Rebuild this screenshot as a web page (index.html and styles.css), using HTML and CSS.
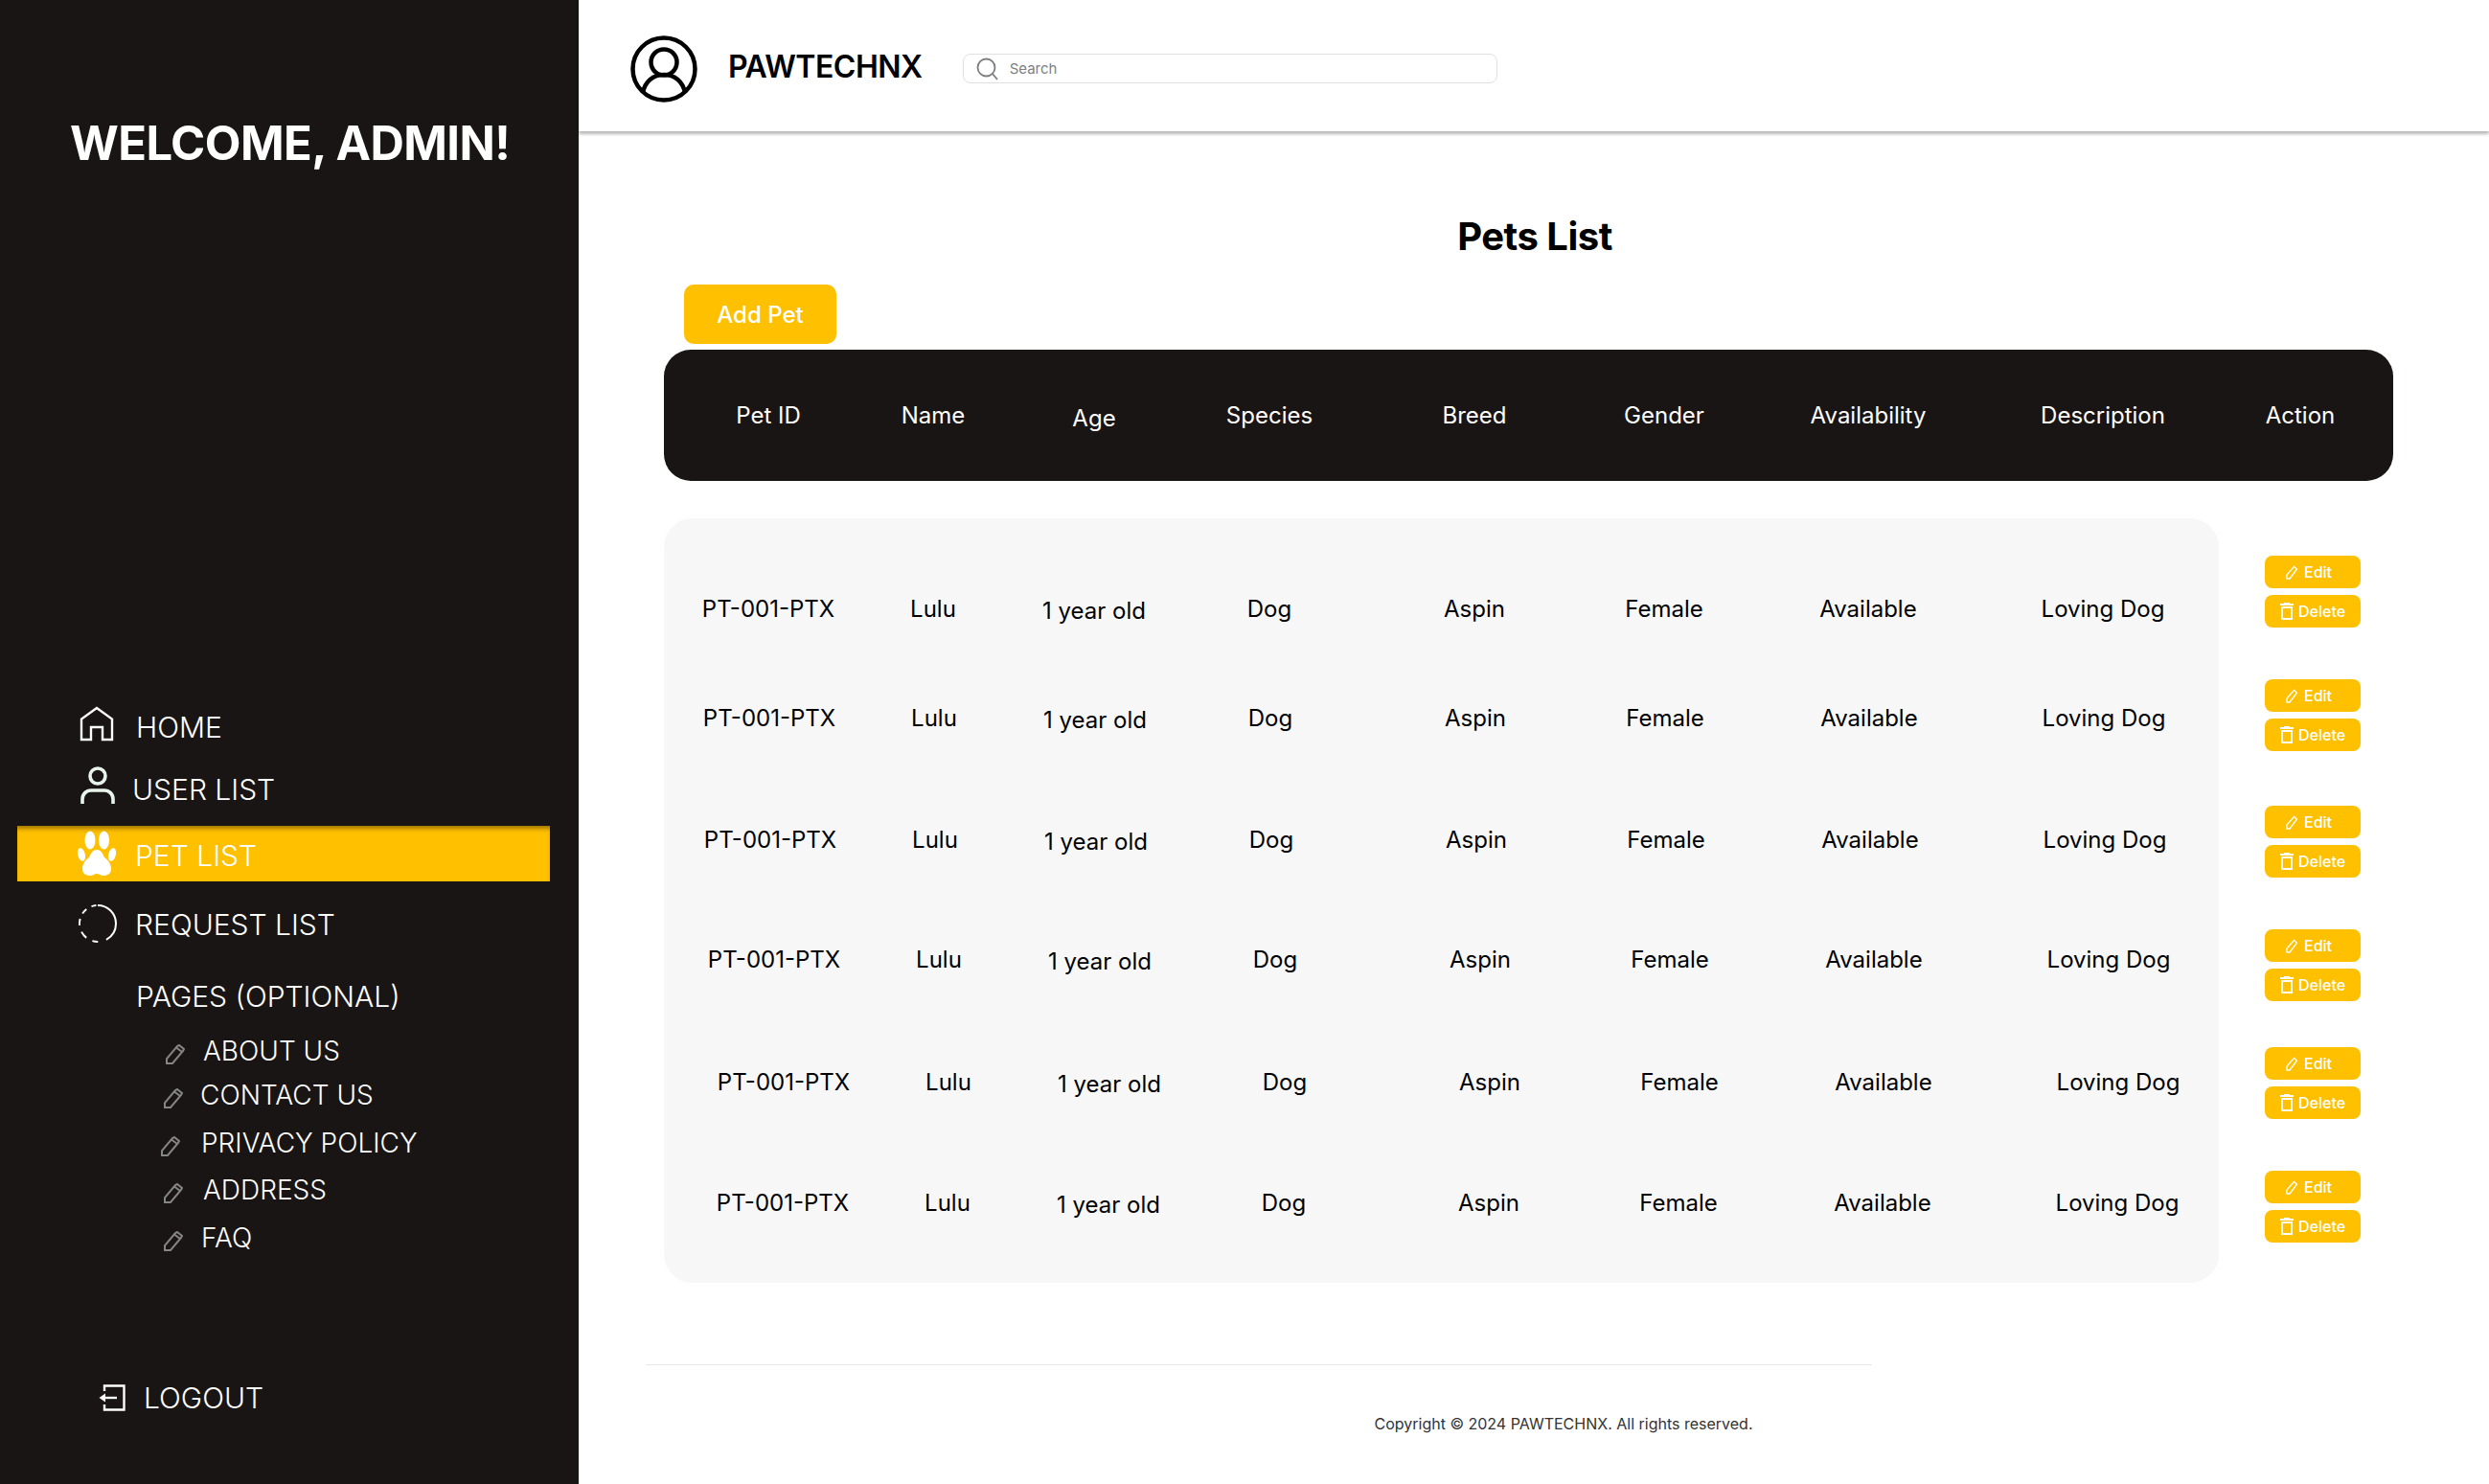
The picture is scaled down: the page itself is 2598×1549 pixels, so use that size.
FILE: index.html
```html
<!DOCTYPE html>
<html lang="en">

<head>
  <meta charset="UTF-8">
  <meta name="viewport" content="width=device-width, initial-scale=1.0">
  <title>Pets List</title>
  <link rel="stylesheet" href="styles.css">
</head>

<body>
  <div class="page">
    <aside class="sidebar">
      <h1 class="welcome">WELCOME, ADMIN!</h1>

      <nav class="nav">
        <a class="nav-item nav-home">
          <svg class="nav-icon" width="36" height="37" viewBox="0 0 36 37" fill="none" stroke="#fff" stroke-width="2.4">
            <path d="M2 35V13.5L18 2l16 11.500V35H24V22H12v13z" />
          </svg>
          <span>HOME</span>
        </a>
        <a class="nav-item nav-user">
          <svg class="nav-icon" width="38" height="40" viewBox="0 0 38 40" fill="none" stroke="#e6f4ea" stroke-width="3.600">
            <circle cx="19" cy="10" r="8" />
            <path d="M3 39v-5a9 9 0 0 1 9-9h14a9 9 0 0 1 9 9v5" />
          </svg>
          <span>USER LIST</span>
        </a>
        <a class="nav-item nav-pet active">
          <svg class="nav-icon" width="42" height="48" viewBox="0 0 42 48" fill="#fff">
            <ellipse cx="14" cy="10" rx="5.500" ry="9.500" />
            <ellipse cx="28.500" cy="10" rx="5.500" ry="9.500" />
            <ellipse cx="5" cy="25" rx="3.800" ry="7" transform="rotate(-14 5 25)" />
            <ellipse cx="37" cy="25" rx="3.800" ry="7" transform="rotate(14 37 25)" />
            <path d="M21 20c4 0 6 3 8 8 3 2 7 6 7 12 0 5-4 7-8 7-3 0-5-2-7-2s-4 2-7 2c-4 0-8-2-8-7 0-6 4-10 7-12 2-5 4-8 8-8z" />
          </svg>
          <span>PET LIST</span>
        </a>
        <a class="nav-item nav-request">
          <svg class="nav-icon" width="40" height="40" viewBox="0 0 40 40" fill="none" stroke="#fff" stroke-width="2">
            <circle cx="20" cy="20" r="19" transform="rotate(-90 20 20)" stroke-dasharray="50 9 6 7 8 7 7 6 6 6 5 2" />
          </svg>
          <span>REQUEST LIST</span>
        </a>
        <a class="nav-item nav-pages">
          <span class="nav-spacer"></span>
          <span>PAGES (OPTIONAL)</span>
        </a>

        <div class="subnav">
          <a class="sub-item sub-about">
            <svg class="pencil" width="20" height="21" viewBox="0 0 20 21" fill="none" stroke="#858585" stroke-width="2">
              <path d="M1 20v-5L12 2l2-1 5 4-1 2L7 20zM11 3.500l6 4.500" />
            </svg>
            <span>ABOUT US</span>
          </a>
          <a class="sub-item sub-contact">
            <svg class="pencil" width="20" height="21" viewBox="0 0 20 21" fill="none" stroke="#858585" stroke-width="2">
              <path d="M1 20v-5L12 2l2-1 5 4-1 2L7 20zM11 3.500l6 4.500" />
            </svg>
            <span>CONTACT US</span>
          </a>
          <a class="sub-item sub-privacy">
            <svg class="pencil" width="20" height="21" viewBox="0 0 20 21" fill="none" stroke="#858585" stroke-width="2">
              <path d="M1 20v-5L12 2l2-1 5 4-1 2L7 20zM11 3.500l6 4.500" />
            </svg>
            <span>PRIVACY POLICY</span>
          </a>
          <a class="sub-item sub-address">
            <svg class="pencil" width="20" height="21" viewBox="0 0 20 21" fill="none" stroke="#858585" stroke-width="2">
              <path d="M1 20v-5L12 2l2-1 5 4-1 2L7 20zM11 3.500l6 4.500" />
            </svg>
            <span>ADDRESS</span>
          </a>
          <a class="sub-item sub-faq">
            <svg class="pencil" width="20" height="21" viewBox="0 0 20 21" fill="none" stroke="#858585" stroke-width="2">
              <path d="M1 20v-5L12 2l2-1 5 4-1 2L7 20zM11 3.500l6 4.500" />
            </svg>
            <span>FAQ</span>
          </a>
        </div>
      </nav>

      <a class="logout">
        <svg width="28" height="28" viewBox="0 0 28 28" fill="none" stroke="#fff" stroke-width="2.400">
          <path d="M6 7V1.500h20.500v25H6V21" />
          <path d="M19 14H6" />
          <path d="M0.500 14L7 9.500v9z" fill="#fff" stroke="none" />
        </svg>
        <span>LOGOUT</span>
      </a>
    </aside>

    <main class="main">
      <header class="topbar">
        <svg class="brand-icon" width="70" height="70" viewBox="0 0 70 70" fill="none" stroke="#000" stroke-width="4.500">
          <circle cx="35" cy="35" r="32.500" />
          <circle cx="35" cy="28" r="13.500" />
          <path d="M13 60c2-12 11-19 22-19s20 7 22 19" />
        </svg>
        <span class="brand-name">PAWTECHNX</span>
        <div class="search">
          <svg width="23" height="24" viewBox="0 0 23 24" fill="none" stroke="#7d7d7d" stroke-width="1.800">
            <circle cx="10.500" cy="10.500" r="9" />
            <path d="M17 17l5 6" />
          </svg>
          <span class="search-text">Search</span>
        </div>
      </header>

      <section class="content">
        <h2 class="page-title">Pets List</h2>
        <button type="button" class="add-btn">Add Pet</button>

        <div class="table-head">
          <div>Pet ID</div>
          <div>Name</div>
          <div class="col-age">Age</div>
          <div>Species</div>
          <div>Breed</div>
          <div>Gender</div>
          <div>Availability</div>
          <div>Description</div>
          <div>Action</div>
        </div>

        <div class="table-body">
          <div class="rows-panel">
            <div class="pet-row">
              <div>PT-001-PTX</div><div>Lulu</div><div class="col-age">1 year old</div><div>Dog</div><div>Aspin</div><div>Female</div><div>Available</div><div>Loving Dog</div>
            </div>
            <div class="pet-row">
              <div>PT-001-PTX</div><div>Lulu</div><div class="col-age">1 year old</div><div>Dog</div><div>Aspin</div><div>Female</div><div>Available</div><div>Loving Dog</div>
            </div>
            <div class="pet-row">
              <div>PT-001-PTX</div><div>Lulu</div><div class="col-age">1 year old</div><div>Dog</div><div>Aspin</div><div>Female</div><div>Available</div><div>Loving Dog</div>
            </div>
            <div class="pet-row">
              <div>PT-001-PTX</div><div>Lulu</div><div class="col-age">1 year old</div><div>Dog</div><div>Aspin</div><div>Female</div><div>Available</div><div>Loving Dog</div>
            </div>
            <div class="pet-row">
              <div>PT-001-PTX</div><div>Lulu</div><div class="col-age">1 year old</div><div>Dog</div><div>Aspin</div><div>Female</div><div>Available</div><div>Loving Dog</div>
            </div>
            <div class="pet-row">
              <div>PT-001-PTX</div><div>Lulu</div><div class="col-age">1 year old</div><div>Dog</div><div>Aspin</div><div>Female</div><div>Available</div><div>Loving Dog</div>
            </div>
          </div>

          <div class="actions">
            <div class="action-stack">
              <button type="button" class="mini-btn mini-edit"><svg width="13" height="15" viewBox="0 0 13 15" fill="none" stroke="#fff" stroke-width="1.300"><path d="M1 14v-4L8.500 1.500l3 2.500L4 14z" /></svg>Edit</button>
              <button type="button" class="mini-btn"><svg width="14" height="18" viewBox="0 0 14 18" fill="none" stroke="#fff" stroke-width="1.800"><path d="M0 2h14M4 1h6M2 5h10v12H2z" /></svg>Delete</button>
            </div>
            <div class="action-stack">
              <button type="button" class="mini-btn mini-edit"><svg width="13" height="15" viewBox="0 0 13 15" fill="none" stroke="#fff" stroke-width="1.300"><path d="M1 14v-4L8.500 1.500l3 2.500L4 14z" /></svg>Edit</button>
              <button type="button" class="mini-btn"><svg width="14" height="18" viewBox="0 0 14 18" fill="none" stroke="#fff" stroke-width="1.800"><path d="M0 2h14M4 1h6M2 5h10v12H2z" /></svg>Delete</button>
            </div>
            <div class="action-stack">
              <button type="button" class="mini-btn mini-edit"><svg width="13" height="15" viewBox="0 0 13 15" fill="none" stroke="#fff" stroke-width="1.300"><path d="M1 14v-4L8.500 1.500l3 2.500L4 14z" /></svg>Edit</button>
              <button type="button" class="mini-btn"><svg width="14" height="18" viewBox="0 0 14 18" fill="none" stroke="#fff" stroke-width="1.800"><path d="M0 2h14M4 1h6M2 5h10v12H2z" /></svg>Delete</button>
            </div>
            <div class="action-stack">
              <button type="button" class="mini-btn mini-edit"><svg width="13" height="15" viewBox="0 0 13 15" fill="none" stroke="#fff" stroke-width="1.300"><path d="M1 14v-4L8.500 1.500l3 2.500L4 14z" /></svg>Edit</button>
              <button type="button" class="mini-btn"><svg width="14" height="18" viewBox="0 0 14 18" fill="none" stroke="#fff" stroke-width="1.800"><path d="M0 2h14M4 1h6M2 5h10v12H2z" /></svg>Delete</button>
            </div>
            <div class="action-stack">
              <button type="button" class="mini-btn mini-edit"><svg width="13" height="15" viewBox="0 0 13 15" fill="none" stroke="#fff" stroke-width="1.300"><path d="M1 14v-4L8.500 1.500l3 2.500L4 14z" /></svg>Edit</button>
              <button type="button" class="mini-btn"><svg width="14" height="18" viewBox="0 0 14 18" fill="none" stroke="#fff" stroke-width="1.800"><path d="M0 2h14M4 1h6M2 5h10v12H2z" /></svg>Delete</button>
            </div>
            <div class="action-stack">
              <button type="button" class="mini-btn mini-edit"><svg width="13" height="15" viewBox="0 0 13 15" fill="none" stroke="#fff" stroke-width="1.300"><path d="M1 14v-4L8.500 1.500l3 2.500L4 14z" /></svg>Edit</button>
              <button type="button" class="mini-btn"><svg width="14" height="18" viewBox="0 0 14 18" fill="none" stroke="#fff" stroke-width="1.800"><path d="M0 2h14M4 1h6M2 5h10v12H2z" /></svg>Delete</button>
            </div>
          </div>
        </div>

        <footer class="footer">
          <div class="footer-line"></div>
          <p class="copyright">Copyright © 2024 PAWTECHNX. All rights reserved.</p>
        </footer>
      </section>
    </main>
  </div>
</body>

</html>
```

FILE: styles.css
```css
* {
  box-sizing: border-box;
}

body {
  margin: 0;
  font-family: Inter, "Liberation Sans", sans-serif;
  color: #000;
  background: #fff;
}

.page {
  display: flex;
  height: 1549px;
  overflow: hidden;
}

/* sidebar */
.sidebar {
  width: 604px;
  flex-shrink: 0;
  background-color: #191514;
  color: #fff;
  display: flex;
  flex-direction: column;
}

.welcome {
  margin: 116px 0 0 73px;
  font-size: 49px;
  line-height: 68px;
  font-weight: 700;
  letter-spacing: -0.6px;
  white-space: nowrap;
}

.nav {
  margin-top: 545px;
  display: flex;
  flex-direction: column;
}

.nav-item {
  display: flex;
  align-items: center;
  height: 58px;
  padding-left: 82px;
  font-size: 30px;
  font-weight: 300;
  white-space: nowrap;
}

.nav-icon {
  flex-shrink: 0;
}

.nav-home {
  margin-top: 0;
  padding-left: 83px;
  gap: 23px;
}

.nav-home .nav-icon,
.nav-user .nav-icon {
  margin-bottom: 6px;
}

.nav-home span,
.nav-user span,
.nav-request span,
.nav-pages span {
  padding-top: 2px;
}

.nav-user {
  margin-top: 7px;
  padding-left: 83px;
  gap: 17px;
}

.nav-pet {
  margin-top: 10px;
  padding-left: 80px;
  gap: 19px;
}

.active {
  margin-left: 18px;
  margin-right: 30px;
  padding-left: 62px;
  background-color: #ffc000;
  box-shadow: inset 0 5px 4px -2px rgba(110, 80, 0, 0.65);
}

.active span {
  padding-top: 4px;
}

.nav-request {
  margin-top: 15px;
  padding-left: 82px;
  gap: 19px;
}

.nav-pages {
  margin-top: 17px;
  padding-left: 82px;
  gap: 19px;
}

.nav-spacer {
  width: 41px;
}

.subnav {
  display: flex;
  flex-direction: column;
}

.sub-item {
  display: flex;
  align-items: center;
  height: 44px;
  padding-top: 2px;
  font-size: 28px;
  font-weight: 300;
  white-space: nowrap;
}

.pencil {
  flex-shrink: 0;
  position: relative;
  top: 3px;
}

.sub-about {
  margin-top: 6px;
  padding-left: 173px;
  gap: 19px;
}

.sub-contact {
  margin-top: 2px;
  padding-left: 171px;
  gap: 18px;
}

.sub-privacy {
  margin-top: 6px;
  padding-left: 168px;
  gap: 22px;
}

.sub-address {
  margin-top: 5px;
  padding-left: 171px;
  gap: 21px;
}

.sub-faq {
  margin-top: 6px;
  padding-left: 171px;
  gap: 19px;
}

.logout {
  margin-top: auto;
  margin-bottom: 68px;
  padding-left: 103px;
  display: flex;
  align-items: center;
  gap: 19px;
  height: 44px;
  font-size: 30px;
  font-weight: 300;
}

/* main */
.main {
  flex: 1;
  min-width: 0;
}

.topbar {
  height: 137px;
  display: flex;
  align-items: center;
  padding: 6px 0 0 54px;
  background: #fff;
  box-shadow: 0 3px 3px rgba(0, 0, 0, 0.28);
}

.brand-name {
  margin-left: 32px;
  padding-bottom: 5px;
  font-size: 32px;
  font-weight: 600;
  letter-spacing: -0.5px;
}

.search {
  margin-left: 42px;
  width: 558px;
  height: 31px;
  border: 1px solid #e0e0e0;
  border-radius: 8px;
  display: flex;
  align-items: center;
  gap: 12px;
  padding-left: 13px;
}

.search-text {
  font-size: 15px;
  color: #808080;
}

.content {
  padding: 85px 0 0 89px;
}

.page-title {
  margin: 0;
  padding-left: 13px;
  width: 1805px;
  text-align: center;
  font-size: 40px;
  line-height: 50px;
  font-weight: 700;
  letter-spacing: -0.5px;
}

.add-btn {
  display: block;
  margin: 25px 0 0 21px;
  width: 159px;
  height: 62px;
  border: 0;
  border-radius: 10px;
  background-color: #ffc000;
  color: #fff;
  font-family: inherit;
  font-size: 24px;
  font-weight: 500;
}

.table-head,
.pet-row {
  display: grid;
  grid-template-columns: 218px 126px 210px 156px 272px 124px 302px 188px 224px;
  text-align: center;
  font-size: 24px;
}

.table-head {
  margin-top: 6px;
  width: 1805px;
  height: 137px;
  align-items: center;
  border-radius: 28px;
  background-color: #191514;
  color: #fff;
  font-weight: 400;
}

.table-head .col-age {
  padding-top: 5px;
}

.table-body {
  margin-top: 39px;
  display: flex;
  align-items: flex-start;
}

.rows-panel {
  width: 1623px;
  height: 798px;
  border-radius: 30px;
  background-color: #f7f7f7;
  padding-top: 4px;
}

.pet-row {
  height: 60px;
  align-items: center;
  grid-template-columns: 218px 126px 210px 156px 272px 124px 302px 188px;
}

.pet-row .col-age {
  padding-top: 5px;
}

.pet-row div:nth-child(n+5) {
  padding-top: 1px;
}

.pet-row:nth-child(1) {
  margin-top: 60px;
}

.pet-row:nth-child(2) {
  margin-top: 54px;
  padding-left: 1px;
}

.pet-row:nth-child(3) {
  margin-top: 67px;
  padding-left: 2px;
}

.pet-row:nth-child(4) {
  margin-top: 65px;
  padding-left: 6px;
}

.pet-row:nth-child(5) {
  margin-top: 68px;
  padding-left: 16px;
}

.pet-row:nth-child(6) {
  margin-top: 66px;
  padding-left: 15px;
}

.actions {
  margin-left: 48px;
  display: flex;
  flex-direction: column;
}

.action-stack {
  display: flex;
  flex-direction: column;
  gap: 7px;
}

.action-stack:nth-child(1) {
  margin-top: 39px;
}

.action-stack:nth-child(2) {
  margin-top: 54px;
}

.action-stack:nth-child(3) {
  margin-top: 57px;
}

.action-stack:nth-child(4) {
  margin-top: 54px;
}

.action-stack:nth-child(5) {
  margin-top: 48px;
}

.action-stack:nth-child(6) {
  margin-top: 54px;
}

.mini-btn {
  width: 100px;
  height: 34px;
  border: 0;
  border-radius: 8px;
  background-color: #ffc000;
  color: #fff;
  font-family: inherit;
  font-size: 16px;
  font-weight: 500;
  display: flex;
  align-items: center;
  gap: 5px;
  padding: 0 0 0 16px;
}

.mini-edit {
  padding-left: 22px;
  gap: 6px;
}

.footer {
  margin: 85px 0 0 -19px;
  width: 1916px;
}

.footer-line {
  width: 1280px;
  height: 1px;
  background-color: #e8e8e8;
}

.copyright {
  margin: 50px 0 0;
  text-align: center;
  font-size: 16px;
  line-height: 22px;
  color: #333;
}
```
